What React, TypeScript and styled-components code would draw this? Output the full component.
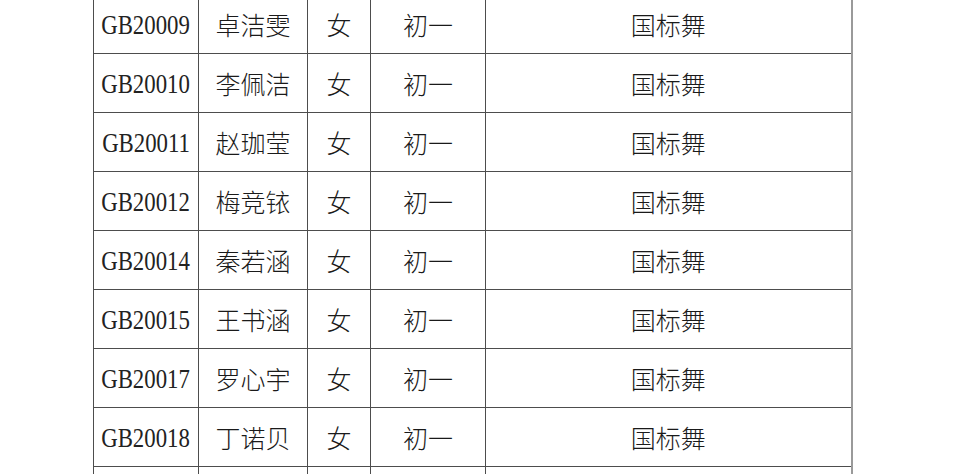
import React from "react";
import styled, { createGlobalStyle } from "styled-components";

const Global = createGlobalStyle`
  html, body {
    margin: 0;
    padding: 0;
    background: #ffffff;
    overflow: hidden;
  }
  body {
    font-family: "Liberation Serif", "Noto Sans CJK SC", serif;
  }
`;

const Page = styled.div`
  width: 962px;
  height: 474px;
  overflow: hidden;
  background: #fff;
`;

const Table = styled.table`
  margin-top: -6px;
  margin-left: 93px;
  border-collapse: collapse;
  table-layout: fixed;
  width: 758px;
`;

const Col = styled.col<{ $w: number }>`
  width: ${(p) => p.$w}px;
`;

const Row = styled.tr`
  height: 59px;
`;

const Cell = styled.td`
  border: 1px solid #4d4d4d;
  padding: 0;
  text-align: center;
  vertical-align: middle;
  color: #1a1a1a;
  font-size: 25px;
  font-weight: 300;
  font-family: "Noto Sans CJK SC", sans-serif;
  line-height: 1;
`;

const CodeCell = styled(Cell)`
  font-family: "Liberation Serif", serif;
  font-size: 26.5px;
  font-weight: 400;
`;

const Code = styled.span`
  display: inline-block;
  transform: scaleX(0.86);
  transform-origin: center;
  padding-top: 2px;
  color: #222;
`;

const LastCell = styled(Cell)`
  border-right: 2px solid #9a9a9a;
`;

type Student = { id: string; name: string; sex: string; grade: string; item: string };

const students: Student[] = [
  { id: "GB20009", name: "卓洁雯", sex: "女", grade: "初一", item: "国标舞" },
  { id: "GB20010", name: "李佩洁", sex: "女", grade: "初一", item: "国标舞" },
  { id: "GB20011", name: "赵珈莹", sex: "女", grade: "初一", item: "国标舞" },
  { id: "GB20012", name: "梅竞铱", sex: "女", grade: "初一", item: "国标舞" },
  { id: "GB20014", name: "秦若涵", sex: "女", grade: "初一", item: "国标舞" },
  { id: "GB20015", name: "王书涵", sex: "女", grade: "初一", item: "国标舞" },
  { id: "GB20017", name: "罗心宇", sex: "女", grade: "初一", item: "国标舞" },
  { id: "GB20018", name: "丁诺贝", sex: "女", grade: "初一", item: "国标舞" },
  { id: "next", name: "", sex: "", grade: "", item: "" },
];

const widths = [105, 109, 63, 115, 366];

export default function App() {
  return (
    <Page>
      <Global />
      <Table>
        <colgroup>
          {widths.map((w, i) => (
            <Col key={i} $w={w} />
          ))}
        </colgroup>
        <tbody>
          {students.map((s) => (
            <Row key={s.id}>
              <CodeCell>
                <Code>{s.id === "next" ? "" : s.id}</Code>
              </CodeCell>
              <Cell>{s.name}</Cell>
              <Cell>{s.sex}</Cell>
              <Cell>{s.grade}</Cell>
              <LastCell>{s.item}</LastCell>
            </Row>
          ))}
        </tbody>
      </Table>
    </Page>
  );
}
